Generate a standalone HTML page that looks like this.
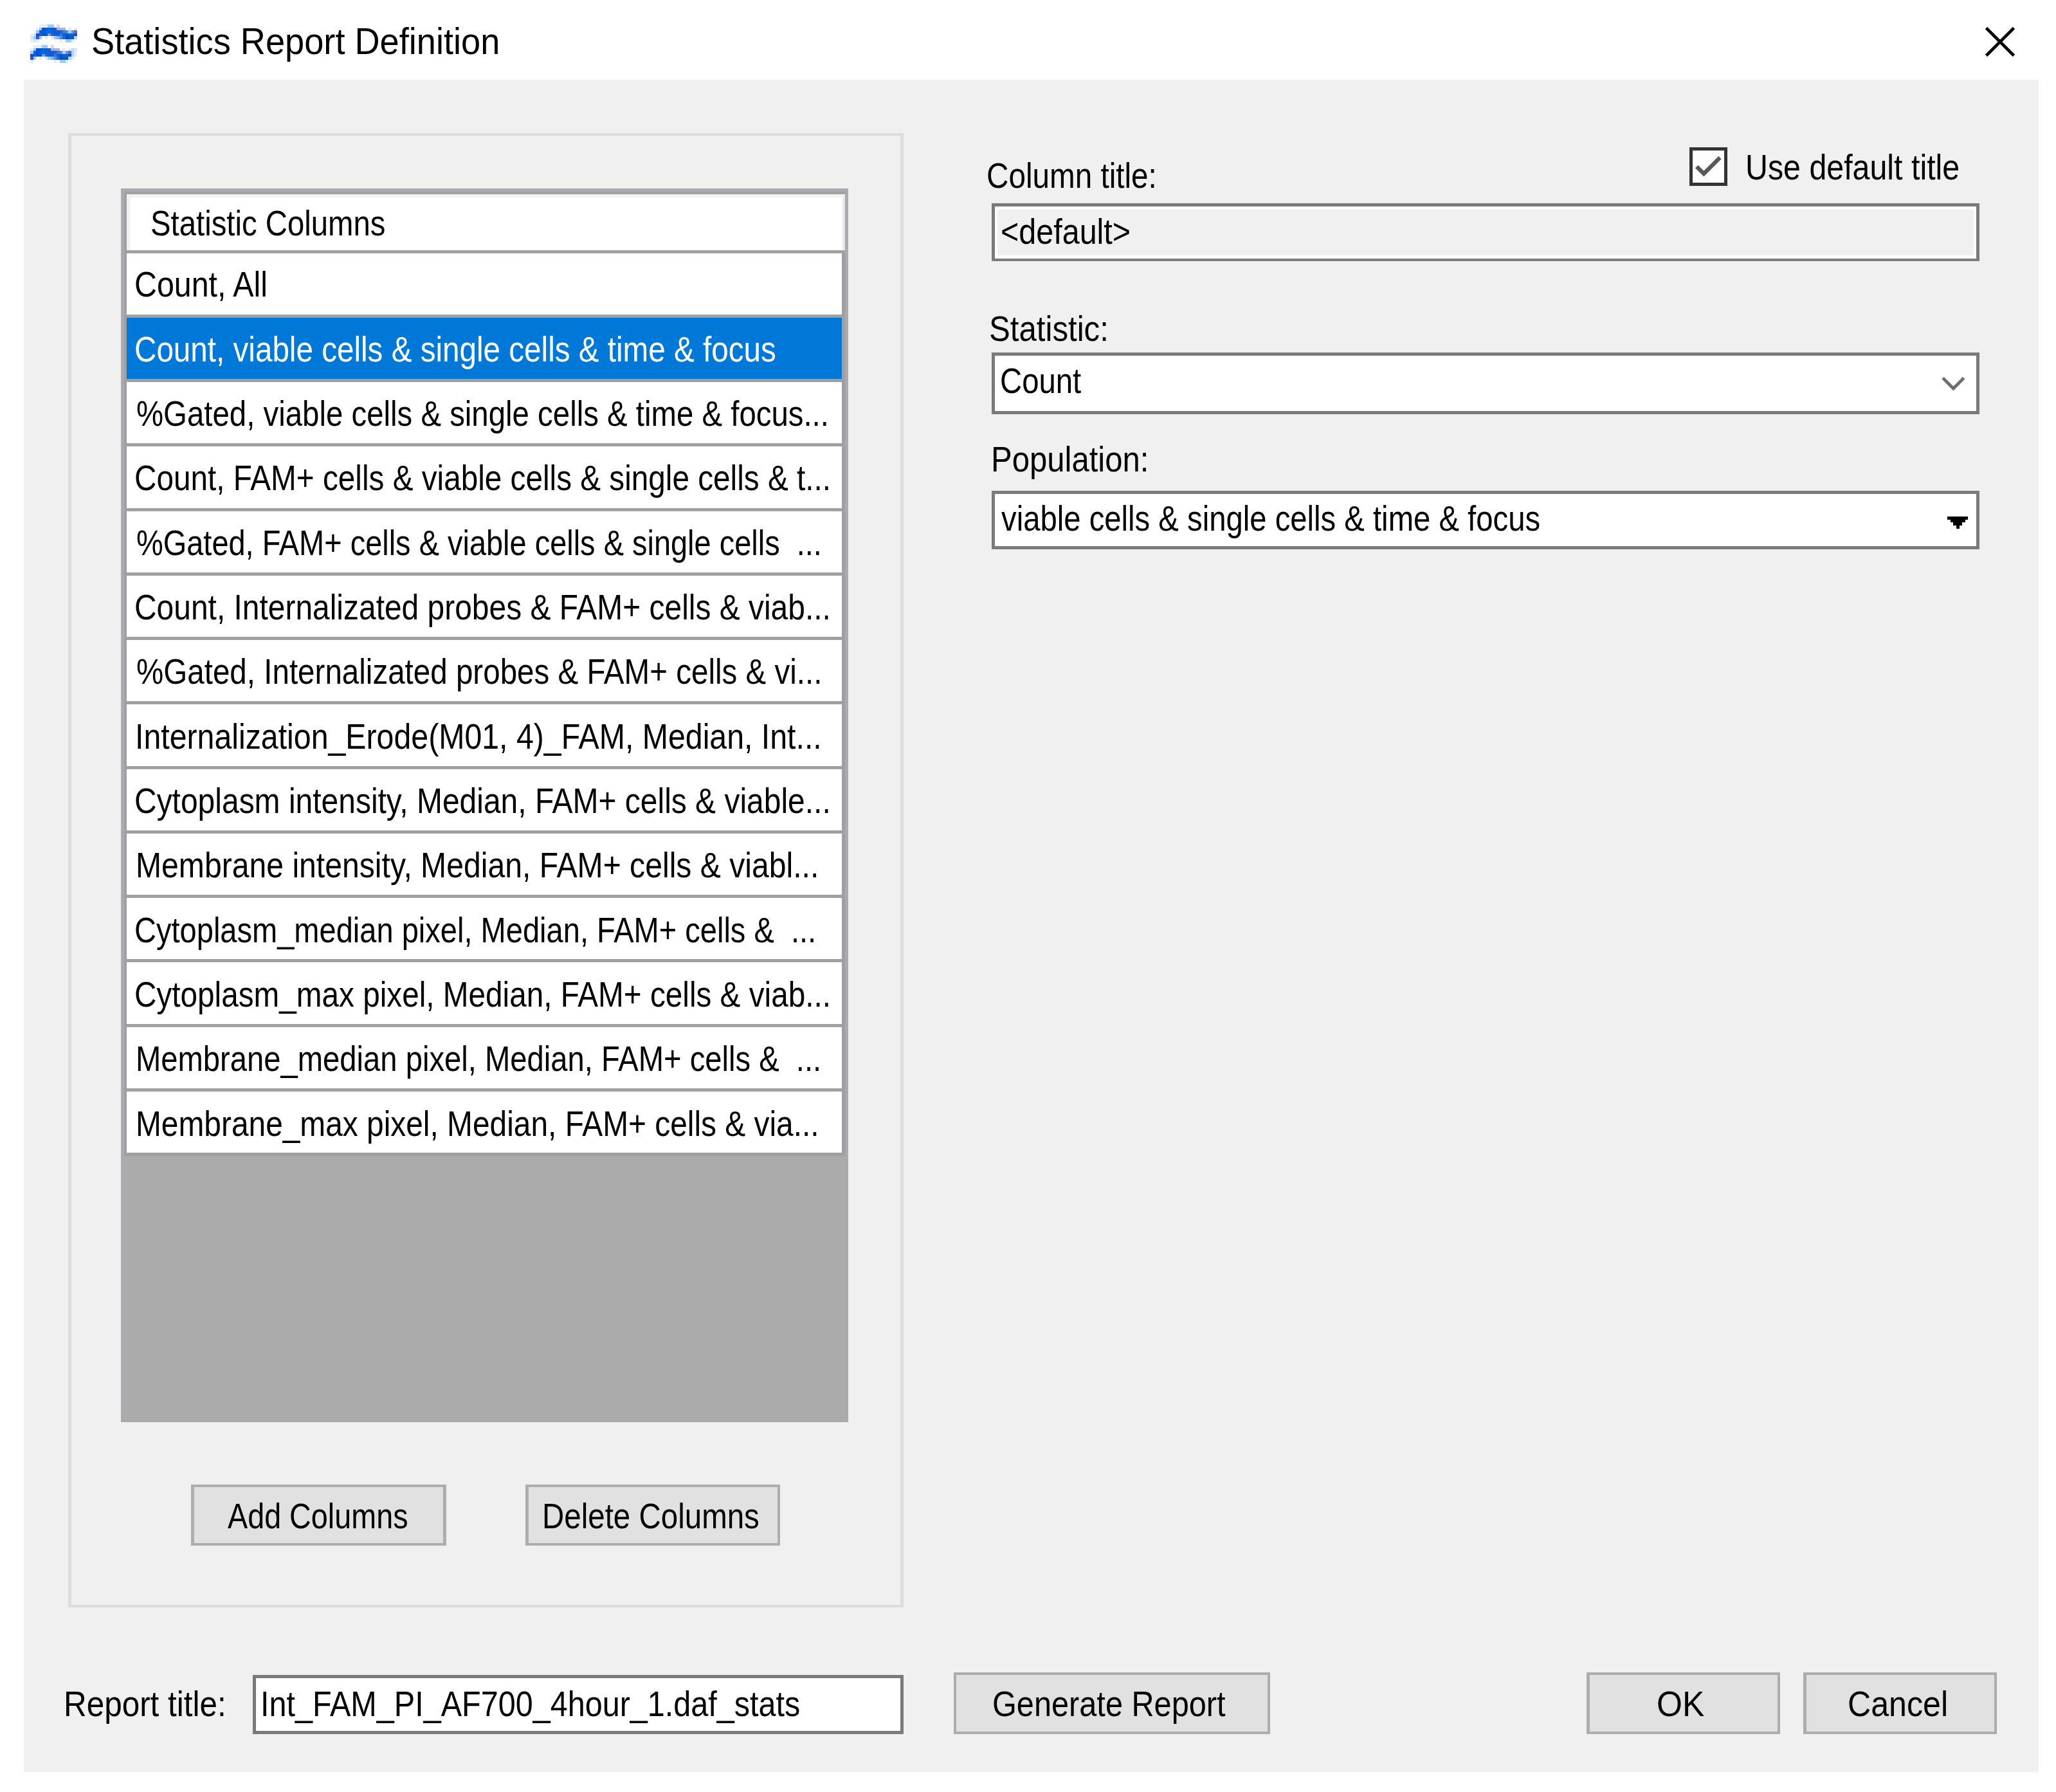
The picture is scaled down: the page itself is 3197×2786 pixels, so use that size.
<!DOCTYPE html>
<html><head><meta charset="utf-8"><title>Statistics Report Definition</title>
<style>
html,body{margin:0;padding:0;background:#fff;}
body{width:3197px;height:2786px;position:relative;overflow:hidden;font-family:"Liberation Sans",sans-serif;}
.b{position:absolute;box-sizing:border-box;}
.t{position:absolute;white-space:pre;transform-origin:0 0;display:block;}
svg{position:absolute;overflow:visible;}
</style></head><body>
<div class="b" style="left:37.0px;top:124.4px;width:3132.7px;height:2631.1px;background:#f0f0f0;"></div>
<svg style="left:47px;top:28.9px" width="73.0" height="73.0" viewBox="0 0 16 16" shape-rendering="crispEdges"><rect x="3" y="2" width="1.02" height="1.02" fill="#e4eefa"/><rect x="4" y="2" width="1.02" height="1.02" fill="#e4eefa"/><rect x="5" y="2" width="1.02" height="1.02" fill="#e4eefa"/><rect x="6" y="2" width="1.02" height="1.02" fill="#99ccff"/><rect x="7" y="2" width="1.02" height="1.02" fill="#99ccff"/><rect x="9" y="2" width="1.02" height="1.02" fill="#d8d8f8"/><rect x="2" y="3" width="1.02" height="1.02" fill="#e4eefa"/><rect x="3" y="3" width="1.02" height="1.02" fill="#99ccff"/><rect x="4" y="3" width="1.02" height="1.02" fill="#0055d8"/><rect x="5" y="3" width="1.02" height="1.02" fill="#0055d8"/><rect x="6" y="3" width="1.02" height="1.02" fill="#0066ee"/><rect x="7" y="3" width="1.02" height="1.02" fill="#0060dd"/><rect x="8" y="3" width="1.02" height="1.02" fill="#2255dd"/><rect x="9" y="3" width="1.02" height="1.02" fill="#9db0ee"/><rect x="10" y="3" width="1.02" height="1.02" fill="#9db0ee"/><rect x="11" y="3" width="1.02" height="1.02" fill="#a8b8e0"/><rect x="13" y="3" width="1.02" height="1.02" fill="#e4eefa"/><rect x="15" y="3" width="1.02" height="1.02" fill="#e4eefa"/><rect x="1" y="4" width="1.02" height="1.02" fill="#eef2fa"/><rect x="2" y="4" width="1.02" height="1.02" fill="#99ccff"/><rect x="3" y="4" width="1.02" height="1.02" fill="#1060d8"/><rect x="4" y="4" width="1.02" height="1.02" fill="#0058d8"/><rect x="5" y="4" width="1.02" height="1.02" fill="#0066e8"/><rect x="6" y="4" width="1.02" height="1.02" fill="#0066ee"/><rect x="7" y="4" width="1.02" height="1.02" fill="#0066ee"/><rect x="8" y="4" width="1.02" height="1.02" fill="#1060cc"/><rect x="9" y="4" width="1.02" height="1.02" fill="#0a5cd0"/><rect x="10" y="4" width="1.02" height="1.02" fill="#2060dd"/><rect x="11" y="4" width="1.02" height="1.02" fill="#3a78d8"/><rect x="12" y="4" width="1.02" height="1.02" fill="#4a90e8"/><rect x="13" y="4" width="1.02" height="1.02" fill="#a8d0ff"/><rect x="14" y="4" width="1.02" height="1.02" fill="#6a95e0"/><rect x="15" y="4" width="1.02" height="1.02" fill="#5570cc"/><rect x="0" y="5" width="1.02" height="1.02" fill="#e4eefa"/><rect x="1" y="5" width="1.02" height="1.02" fill="#d4e8fa"/><rect x="2" y="5" width="1.02" height="1.02" fill="#2244cc"/><rect x="3" y="5" width="1.02" height="1.02" fill="#1060d8"/><rect x="4" y="5" width="1.02" height="1.02" fill="#0058d8"/><rect x="5" y="5" width="1.02" height="1.02" fill="#0058d8"/><rect x="6" y="5" width="1.02" height="1.02" fill="#7799dd"/><rect x="7" y="5" width="1.02" height="1.02" fill="#2266cc"/><rect x="8" y="5" width="1.02" height="1.02" fill="#1060cc"/><rect x="9" y="5" width="1.02" height="1.02" fill="#0a60d8"/><rect x="10" y="5" width="1.02" height="1.02" fill="#3377ee"/><rect x="11" y="5" width="1.02" height="1.02" fill="#1060c8"/><rect x="12" y="5" width="1.02" height="1.02" fill="#0058d0"/><rect x="13" y="5" width="1.02" height="1.02" fill="#0a60d0"/><rect x="14" y="5" width="1.02" height="1.02" fill="#1a60c8"/><rect x="15" y="5" width="1.02" height="1.02" fill="#2244bb"/><rect x="0" y="6" width="1.02" height="1.02" fill="#d4e8fa"/><rect x="1" y="6" width="1.02" height="1.02" fill="#99ccff"/><rect x="2" y="6" width="1.02" height="1.02" fill="#3355cc"/><rect x="3" y="6" width="1.02" height="1.02" fill="#99ccff"/><rect x="5" y="6" width="1.02" height="1.02" fill="#e4eefa"/><rect x="7" y="6" width="1.02" height="1.02" fill="#e4eefa"/><rect x="8" y="6" width="1.02" height="1.02" fill="#99ccff"/><rect x="9" y="6" width="1.02" height="1.02" fill="#99aaee"/><rect x="10" y="6" width="1.02" height="1.02" fill="#4a90e8"/><rect x="11" y="6" width="1.02" height="1.02" fill="#2266cc"/><rect x="12" y="6" width="1.02" height="1.02" fill="#0048d0"/><rect x="13" y="6" width="1.02" height="1.02" fill="#0a58c0"/><rect x="14" y="6" width="1.02" height="1.02" fill="#0a58c0"/><rect x="15" y="6" width="1.02" height="1.02" fill="#aad4ff"/><rect x="0" y="7" width="1.02" height="1.02" fill="#e4eefa"/><rect x="1" y="7" width="1.02" height="1.02" fill="#d4e8fa"/><rect x="2" y="7" width="1.02" height="1.02" fill="#e4eefa"/><rect x="10" y="7" width="1.02" height="1.02" fill="#e4eefa"/><rect x="12" y="7" width="1.02" height="1.02" fill="#99ccff"/><rect x="13" y="7" width="1.02" height="1.02" fill="#99ccff"/><rect x="14" y="7" width="1.02" height="1.02" fill="#e4eefa"/><rect x="1" y="9" width="1.02" height="1.02" fill="#e4eefa"/><rect x="2" y="9" width="1.02" height="1.02" fill="#e4eefa"/><rect x="3" y="9" width="1.02" height="1.02" fill="#e4eefa"/><rect x="4" y="9" width="1.02" height="1.02" fill="#99ccff"/><rect x="5" y="9" width="1.02" height="1.02" fill="#99ccff"/><rect x="7" y="9" width="1.02" height="1.02" fill="#d8d8f8"/><rect x="0" y="10" width="1.02" height="1.02" fill="#e4eefa"/><rect x="1" y="10" width="1.02" height="1.02" fill="#99ccff"/><rect x="2" y="10" width="1.02" height="1.02" fill="#0055d8"/><rect x="3" y="10" width="1.02" height="1.02" fill="#0055d8"/><rect x="4" y="10" width="1.02" height="1.02" fill="#0066ee"/><rect x="5" y="10" width="1.02" height="1.02" fill="#0060dd"/><rect x="6" y="10" width="1.02" height="1.02" fill="#2255dd"/><rect x="7" y="10" width="1.02" height="1.02" fill="#9db0ee"/><rect x="8" y="10" width="1.02" height="1.02" fill="#9db0ee"/><rect x="9" y="10" width="1.02" height="1.02" fill="#a8b8e0"/><rect x="11" y="10" width="1.02" height="1.02" fill="#e4eefa"/><rect x="13" y="10" width="1.02" height="1.02" fill="#e4eefa"/><rect x="14" y="10" width="1.02" height="1.02" fill="#b8dcff"/><rect x="15" y="10" width="1.02" height="1.02" fill="#d4e8fa"/><rect x="0" y="11" width="1.02" height="1.02" fill="#99ccff"/><rect x="1" y="11" width="1.02" height="1.02" fill="#1060d8"/><rect x="2" y="11" width="1.02" height="1.02" fill="#0058d8"/><rect x="3" y="11" width="1.02" height="1.02" fill="#0066e8"/><rect x="4" y="11" width="1.02" height="1.02" fill="#0066ee"/><rect x="5" y="11" width="1.02" height="1.02" fill="#0066ee"/><rect x="6" y="11" width="1.02" height="1.02" fill="#1060cc"/><rect x="7" y="11" width="1.02" height="1.02" fill="#0a5cd0"/><rect x="8" y="11" width="1.02" height="1.02" fill="#2060dd"/><rect x="9" y="11" width="1.02" height="1.02" fill="#3a78d8"/><rect x="10" y="11" width="1.02" height="1.02" fill="#4a90e8"/><rect x="11" y="11" width="1.02" height="1.02" fill="#a8d0ff"/><rect x="12" y="11" width="1.02" height="1.02" fill="#6a95e0"/><rect x="13" y="11" width="1.02" height="1.02" fill="#5570cc"/><rect x="14" y="11" width="1.02" height="1.02" fill="#a8d4ff"/><rect x="15" y="11" width="1.02" height="1.02" fill="#e4eefa"/><rect x="0" y="12" width="1.02" height="1.02" fill="#2244cc"/><rect x="1" y="12" width="1.02" height="1.02" fill="#1060d8"/><rect x="2" y="12" width="1.02" height="1.02" fill="#0058d8"/><rect x="3" y="12" width="1.02" height="1.02" fill="#0058d8"/><rect x="4" y="12" width="1.02" height="1.02" fill="#7799dd"/><rect x="5" y="12" width="1.02" height="1.02" fill="#2266cc"/><rect x="6" y="12" width="1.02" height="1.02" fill="#1060cc"/><rect x="7" y="12" width="1.02" height="1.02" fill="#0a60d8"/><rect x="8" y="12" width="1.02" height="1.02" fill="#3377ee"/><rect x="9" y="12" width="1.02" height="1.02" fill="#1060c8"/><rect x="10" y="12" width="1.02" height="1.02" fill="#0058d0"/><rect x="11" y="12" width="1.02" height="1.02" fill="#0a60d0"/><rect x="12" y="12" width="1.02" height="1.02" fill="#1a60c8"/><rect x="13" y="12" width="1.02" height="1.02" fill="#2244bb"/><rect x="14" y="12" width="1.02" height="1.02" fill="#a8d4ff"/><rect x="15" y="12" width="1.02" height="1.02" fill="#e4eefa"/><rect x="0" y="13" width="1.02" height="1.02" fill="#3355cc"/><rect x="1" y="13" width="1.02" height="1.02" fill="#99ccff"/><rect x="3" y="13" width="1.02" height="1.02" fill="#e4eefa"/><rect x="5" y="13" width="1.02" height="1.02" fill="#e4eefa"/><rect x="6" y="13" width="1.02" height="1.02" fill="#99ccff"/><rect x="7" y="13" width="1.02" height="1.02" fill="#99aaee"/><rect x="8" y="13" width="1.02" height="1.02" fill="#4a90e8"/><rect x="9" y="13" width="1.02" height="1.02" fill="#2266cc"/><rect x="10" y="13" width="1.02" height="1.02" fill="#0048d0"/><rect x="11" y="13" width="1.02" height="1.02" fill="#0a58c0"/><rect x="12" y="13" width="1.02" height="1.02" fill="#0a58c0"/><rect x="13" y="13" width="1.02" height="1.02" fill="#aad4ff"/><rect x="14" y="13" width="1.02" height="1.02" fill="#e4eefa"/><rect x="0" y="14" width="1.02" height="1.02" fill="#e4eefa"/><rect x="8" y="14" width="1.02" height="1.02" fill="#e4eefa"/><rect x="10" y="14" width="1.02" height="1.02" fill="#99ccff"/><rect x="11" y="14" width="1.02" height="1.02" fill="#99ccff"/><rect x="12" y="14" width="1.02" height="1.02" fill="#e4eefa"/></svg>
<span class="t" style="left:141.6px;top:34.6px;font-size:58px;line-height:58px;color:#000;transform:scaleX(0.9341);">Statistics Report Definition</span>
<svg style="left:3087px;top:42.4px" width="46" height="46" viewBox="0 0 46 46"><path d="M1.5 1.5 L44.5 44.5 M44.5 1.5 L1.5 44.5" stroke="#000" stroke-width="4.6" fill="none"/></svg>
<div class="b" style="left:106.3px;top:206.7px;width:1298.3px;height:4.6px;background:#dcdcdc;"></div>
<div class="b" style="left:106.3px;top:2494.9px;width:1298.3px;height:4.6px;background:#dcdcdc;"></div>
<div class="b" style="left:106.3px;top:211.3px;width:4.6px;height:2283.7px;background:#dcdcdc;"></div>
<div class="b" style="left:1400.0px;top:211.3px;width:4.6px;height:2283.7px;background:#dcdcdc;"></div>
<div class="b" style="left:188.2px;top:293.0px;width:1130.4px;height:1918.4px;background:#ababab;"></div>
<div class="b" style="left:188.2px;top:293.0px;width:1130.4px;height:4.6px;background:#a9abb0;"></div>
<div class="b" style="left:188.2px;top:293.0px;width:4.6px;height:1918.4px;background:#a9abb0;"></div>
<div class="b" style="left:1314.0px;top:293.0px;width:4.6px;height:1918.4px;background:#a9abb0;"></div>
<div class="b" style="left:192.8px;top:297.6px;width:1121.3px;height:4.6px;background:#a0a0a0;"></div>
<div class="b" style="left:192.8px;top:297.6px;width:4.6px;height:1499.4px;background:#a0a0a0;"></div>
<div class="b" style="left:197.3px;top:302.1px;width:1116.7px;height:86.8px;background:#fff;"></div>
<div class="b" style="left:197.3px;top:302.1px;width:1116.7px;height:4.6px;background:#f0f0f0;"></div>
<div class="b" style="left:197.3px;top:302.1px;width:4.6px;height:86.8px;background:#f0f0f0;"></div>
<div class="b" style="left:1309.5px;top:306.7px;width:4.6px;height:82.2px;background:#e8e8e8;"></div>
<div class="b" style="left:197.3px;top:388.9px;width:1116.7px;height:4.6px;background:#a0a0a0;"></div>
<span class="t" style="left:234.4px;top:318.6px;font-size:56px;line-height:56px;color:#000;transform:scaleX(0.8448);">Statistic Columns</span>
<div class="b" style="left:197.3px;top:393.5px;width:1112.2px;height:95.7px;background:#fff;"></div>
<div class="b" style="left:197.3px;top:488.9px;width:1117.0px;height:4.9px;background:#a0a0a0;"></div>
<div class="b" style="left:1309.2px;top:393.0px;width:5.2px;height:100.8px;background:#a0a0a0;"></div>
<span class="t" style="left:208.8px;top:414.3px;font-size:56px;line-height:56px;color:#000;transform:scaleX(0.8632);">Count, All</span>
<div class="b" style="left:197.3px;top:493.8px;width:1112.2px;height:95.7px;background:#0078d7;"></div>
<div class="b" style="left:197.3px;top:589.1px;width:1117.0px;height:4.9px;background:#a0a0a0;"></div>
<div class="b" style="left:1309.2px;top:493.2px;width:5.2px;height:100.8px;background:#a0a0a0;"></div>
<span class="t" style="left:208.8px;top:514.6px;font-size:56px;line-height:56px;color:#fff;transform:scaleX(0.8503);">Count, viable cells &amp; single cells &amp; time &amp; focus</span>
<div class="b" style="left:197.3px;top:594.0px;width:1112.2px;height:95.7px;background:#fff;"></div>
<div class="b" style="left:197.3px;top:689.4px;width:1117.0px;height:4.9px;background:#a0a0a0;"></div>
<div class="b" style="left:1309.2px;top:593.5px;width:5.2px;height:100.8px;background:#a0a0a0;"></div>
<span class="t" style="left:211.8px;top:614.9px;font-size:56px;line-height:56px;color:#000;transform:scaleX(0.8460);">%Gated, viable cells &amp; single cells &amp; time &amp; focus...</span>
<div class="b" style="left:197.3px;top:694.2px;width:1112.2px;height:95.7px;background:#fff;"></div>
<div class="b" style="left:197.3px;top:789.6px;width:1117.0px;height:4.9px;background:#a0a0a0;"></div>
<div class="b" style="left:1309.2px;top:693.8px;width:5.2px;height:100.8px;background:#a0a0a0;"></div>
<span class="t" style="left:208.8px;top:715.3px;font-size:56px;line-height:56px;color:#000;transform:scaleX(0.8518);">Count, FAM+ cells &amp; viable cells &amp; single cells &amp; t...</span>
<div class="b" style="left:197.3px;top:794.5px;width:1112.2px;height:95.7px;background:#fff;"></div>
<div class="b" style="left:197.3px;top:889.9px;width:1117.0px;height:4.9px;background:#a0a0a0;"></div>
<div class="b" style="left:1309.2px;top:794.0px;width:5.2px;height:100.8px;background:#a0a0a0;"></div>
<span class="t" style="left:211.8px;top:815.6px;font-size:56px;line-height:56px;color:#000;transform:scaleX(0.8383);">%Gated, FAM+ cells &amp; viable cells &amp; single cells  ...</span>
<div class="b" style="left:197.3px;top:894.8px;width:1112.2px;height:95.7px;background:#fff;"></div>
<div class="b" style="left:197.3px;top:990.1px;width:1117.0px;height:4.9px;background:#a0a0a0;"></div>
<div class="b" style="left:1309.2px;top:894.2px;width:5.2px;height:100.8px;background:#a0a0a0;"></div>
<span class="t" style="left:208.8px;top:915.9px;font-size:56px;line-height:56px;color:#000;transform:scaleX(0.8558);">Count, Internalizated probes &amp; FAM+ cells &amp; viab...</span>
<div class="b" style="left:197.3px;top:995.0px;width:1112.2px;height:95.7px;background:#fff;"></div>
<div class="b" style="left:197.3px;top:1090.4px;width:1117.0px;height:4.9px;background:#a0a0a0;"></div>
<div class="b" style="left:1309.2px;top:994.5px;width:5.2px;height:100.8px;background:#a0a0a0;"></div>
<span class="t" style="left:211.8px;top:1016.2px;font-size:56px;line-height:56px;color:#000;transform:scaleX(0.8491);">%Gated, Internalizated probes &amp; FAM+ cells &amp; vi...</span>
<div class="b" style="left:197.3px;top:1095.2px;width:1112.2px;height:95.7px;background:#fff;"></div>
<div class="b" style="left:197.3px;top:1190.6px;width:1117.0px;height:4.9px;background:#a0a0a0;"></div>
<div class="b" style="left:1309.2px;top:1094.8px;width:5.2px;height:100.8px;background:#a0a0a0;"></div>
<span class="t" style="left:210.4px;top:1116.5px;font-size:56px;line-height:56px;color:#000;transform:scaleX(0.8619);">Internalization_Erode(M01, 4)_FAM, Median, Int...</span>
<div class="b" style="left:197.3px;top:1195.5px;width:1112.2px;height:95.7px;background:#fff;"></div>
<div class="b" style="left:197.3px;top:1290.9px;width:1117.0px;height:4.9px;background:#a0a0a0;"></div>
<div class="b" style="left:1309.2px;top:1195.0px;width:5.2px;height:100.8px;background:#a0a0a0;"></div>
<span class="t" style="left:208.8px;top:1216.9px;font-size:56px;line-height:56px;color:#000;transform:scaleX(0.8565);">Cytoplasm intensity, Median, FAM+ cells &amp; viable...</span>
<div class="b" style="left:197.3px;top:1295.8px;width:1112.2px;height:95.7px;background:#fff;"></div>
<div class="b" style="left:197.3px;top:1391.1px;width:1117.0px;height:4.9px;background:#a0a0a0;"></div>
<div class="b" style="left:1309.2px;top:1295.2px;width:5.2px;height:100.8px;background:#a0a0a0;"></div>
<span class="t" style="left:211.3px;top:1317.2px;font-size:56px;line-height:56px;color:#000;transform:scaleX(0.8594);">Membrane intensity, Median, FAM+ cells &amp; viabl...</span>
<div class="b" style="left:197.3px;top:1396.0px;width:1112.2px;height:95.7px;background:#fff;"></div>
<div class="b" style="left:197.3px;top:1491.4px;width:1117.0px;height:4.9px;background:#a0a0a0;"></div>
<div class="b" style="left:1309.2px;top:1395.5px;width:5.2px;height:100.8px;background:#a0a0a0;"></div>
<span class="t" style="left:208.8px;top:1417.5px;font-size:56px;line-height:56px;color:#000;transform:scaleX(0.8400);">Cytoplasm_median pixel, Median, FAM+ cells &amp;  ...</span>
<div class="b" style="left:197.3px;top:1496.2px;width:1112.2px;height:95.7px;background:#fff;"></div>
<div class="b" style="left:197.3px;top:1591.6px;width:1117.0px;height:4.9px;background:#a0a0a0;"></div>
<div class="b" style="left:1309.2px;top:1495.8px;width:5.2px;height:100.8px;background:#a0a0a0;"></div>
<span class="t" style="left:208.8px;top:1517.8px;font-size:56px;line-height:56px;color:#000;transform:scaleX(0.8518);">Cytoplasm_max pixel, Median, FAM+ cells &amp; viab...</span>
<div class="b" style="left:197.3px;top:1596.5px;width:1112.2px;height:95.7px;background:#fff;"></div>
<div class="b" style="left:197.3px;top:1691.9px;width:1117.0px;height:4.9px;background:#a0a0a0;"></div>
<div class="b" style="left:1309.2px;top:1596.0px;width:5.2px;height:100.8px;background:#a0a0a0;"></div>
<span class="t" style="left:211.3px;top:1618.1px;font-size:56px;line-height:56px;color:#000;transform:scaleX(0.8427);">Membrane_median pixel, Median, FAM+ cells &amp;  ...</span>
<div class="b" style="left:197.3px;top:1696.8px;width:1112.2px;height:95.7px;background:#fff;"></div>
<div class="b" style="left:197.3px;top:1792.1px;width:1117.0px;height:4.9px;background:#a0a0a0;"></div>
<div class="b" style="left:1309.2px;top:1696.2px;width:5.2px;height:100.8px;background:#a0a0a0;"></div>
<span class="t" style="left:211.3px;top:1718.5px;font-size:56px;line-height:56px;color:#000;transform:scaleX(0.8546);">Membrane_max pixel, Median, FAM+ cells &amp; via...</span>
<div class="b" style="left:297.4px;top:2307.8px;width:396.2px;height:95.4px;background:#adadad;"></div>
<div class="b" style="left:302.0px;top:2312.4px;width:387.1px;height:86.3px;background:#e1e1e1;"></div>
<span class="t" style="left:354.2px;top:2328.7px;font-size:56px;line-height:56px;color:#000;transform:scaleX(0.8344);">Add Columns</span>
<div class="b" style="left:817.0px;top:2307.8px;width:396.3px;height:95.4px;background:#adadad;"></div>
<div class="b" style="left:821.6px;top:2312.4px;width:387.2px;height:86.3px;background:#e1e1e1;"></div>
<span class="t" style="left:842.9px;top:2328.7px;font-size:56px;line-height:56px;color:#000;transform:scaleX(0.8480);">Delete Columns</span>
<span class="t" style="left:1534.3px;top:245.1px;font-size:56px;line-height:56px;color:#000;transform:scaleX(0.8508);">Column title:</span>
<div class="b" style="left:2627.1px;top:229.3px;width:58.7px;height:59.4px;background:#333;"></div>
<div class="b" style="left:2631.6px;top:233.8px;width:49.7px;height:50.4px;background:#fff;"></div>
<svg style="left:2627.1px;top:229.3px" width="58.7" height="59.4" viewBox="0 0 58.7 59.4"><path d="M11.2 30.1 L22.4 41.1 L47.5 16" stroke="#585858" stroke-width="6.3" fill="none" stroke-linejoin="miter"/></svg>
<span class="t" style="left:2714.0px;top:231.7px;font-size:56px;line-height:56px;color:#000;transform:scaleX(0.8632);">Use default title</span>
<div class="b" style="left:1542.3px;top:316.4px;width:1535.7px;height:89.9px;background:#7a7a7a;"></div>
<div class="b" style="left:1546.9px;top:321.0px;width:1526.6px;height:80.8px;background:#f0f0f0;"></div>
<div class="b" style="left:1546.9px;top:321.0px;width:1526.6px;height:4.6px;background:#fff;"></div>
<div class="b" style="left:1546.9px;top:397.2px;width:1526.6px;height:4.6px;background:#fff;"></div>
<div class="b" style="left:1546.9px;top:325.5px;width:4.6px;height:71.7px;background:#fff;"></div>
<div class="b" style="left:3068.9px;top:325.5px;width:4.6px;height:71.7px;background:#fff;"></div>
<span class="t" style="left:1556.4px;top:331.9px;font-size:56px;line-height:56px;color:#000;transform:scaleX(0.8655);">&lt;default&gt;</span>
<span class="t" style="left:1537.7px;top:482.7px;font-size:56px;line-height:56px;color:#000;transform:scaleX(0.8780);">Statistic:</span>
<div class="b" style="left:1542.3px;top:548.0px;width:1535.7px;height:96.0px;background:#7a7a7a;"></div>
<div class="b" style="left:1546.9px;top:552.6px;width:1526.6px;height:86.9px;background:#fff;"></div>
<span class="t" style="left:1554.8px;top:564.4px;font-size:56px;line-height:56px;color:#000;transform:scaleX(0.8446);">Count</span>
<svg style="left:3018.7px;top:584.8px" width="36.8" height="23.4" viewBox="0 0 36.8 23.4"><path d="M2 2.5 L18.4 19 L34.8 2.5" stroke="#6e6e6e" stroke-width="4.8" fill="none"/></svg>
<span class="t" style="left:1541.4px;top:686.4px;font-size:56px;line-height:56px;color:#000;transform:scaleX(0.8754);">Population:</span>
<div class="b" style="left:1542.3px;top:763.0px;width:1535.7px;height:90.5px;background:#7a7a7a;"></div>
<div class="b" style="left:1546.9px;top:767.6px;width:1526.6px;height:81.4px;background:#fff;"></div>
<span class="t" style="left:1556.5px;top:778.4px;font-size:56px;line-height:56px;color:#000;transform:scaleX(0.8441);">viable cells &amp; single cells &amp; time &amp; focus</span>
<svg style="left:3027.6px;top:803px" width="32.4" height="18.8" viewBox="0 0 7 4" shape-rendering="crispEdges"><path d="M0 0H7V1H6V2H5V3H4V4H3V3H2V2H1V1H0Z" fill="#000"/></svg>
<span class="t" style="left:99.0px;top:2621.2px;font-size:56px;line-height:56px;color:#000;transform:scaleX(0.8824);">Report title:</span>
<div class="b" style="left:393.3px;top:2604.0px;width:1011.5px;height:92.0px;background:#7a7a7a;"></div>
<div class="b" style="left:397.9px;top:2608.6px;width:1002.4px;height:82.9px;background:#fff;"></div>
<span class="t" style="left:404.8px;top:2621.2px;font-size:56px;line-height:56px;color:#000;transform:scaleX(0.8669);">Int_FAM_PI_AF700_4hour_1.daf_stats</span>
<div class="b" style="left:1482.7px;top:2599.5px;width:492.7px;height:96.9px;background:#adadad;"></div>
<div class="b" style="left:1487.3px;top:2604.1px;width:483.6px;height:87.8px;background:#e1e1e1;"></div>
<span class="t" style="left:1542.8px;top:2621.2px;font-size:56px;line-height:56px;color:#000;transform:scaleX(0.8692);">Generate Report</span>
<div class="b" style="left:2467.0px;top:2599.5px;width:301.3px;height:96.9px;background:#adadad;"></div>
<div class="b" style="left:2471.6px;top:2604.1px;width:292.2px;height:87.8px;background:#e1e1e1;"></div>
<span class="t" style="left:2576.1px;top:2621.2px;font-size:56px;line-height:56px;color:#000;transform:scaleX(0.9190);">OK</span>
<div class="b" style="left:2804.3px;top:2599.5px;width:301.2px;height:96.9px;background:#adadad;"></div>
<div class="b" style="left:2808.9px;top:2604.1px;width:292.1px;height:87.8px;background:#e1e1e1;"></div>
<span class="t" style="left:2873.4px;top:2621.2px;font-size:56px;line-height:56px;color:#000;transform:scaleX(0.8953);">Cancel</span>
</body></html>
